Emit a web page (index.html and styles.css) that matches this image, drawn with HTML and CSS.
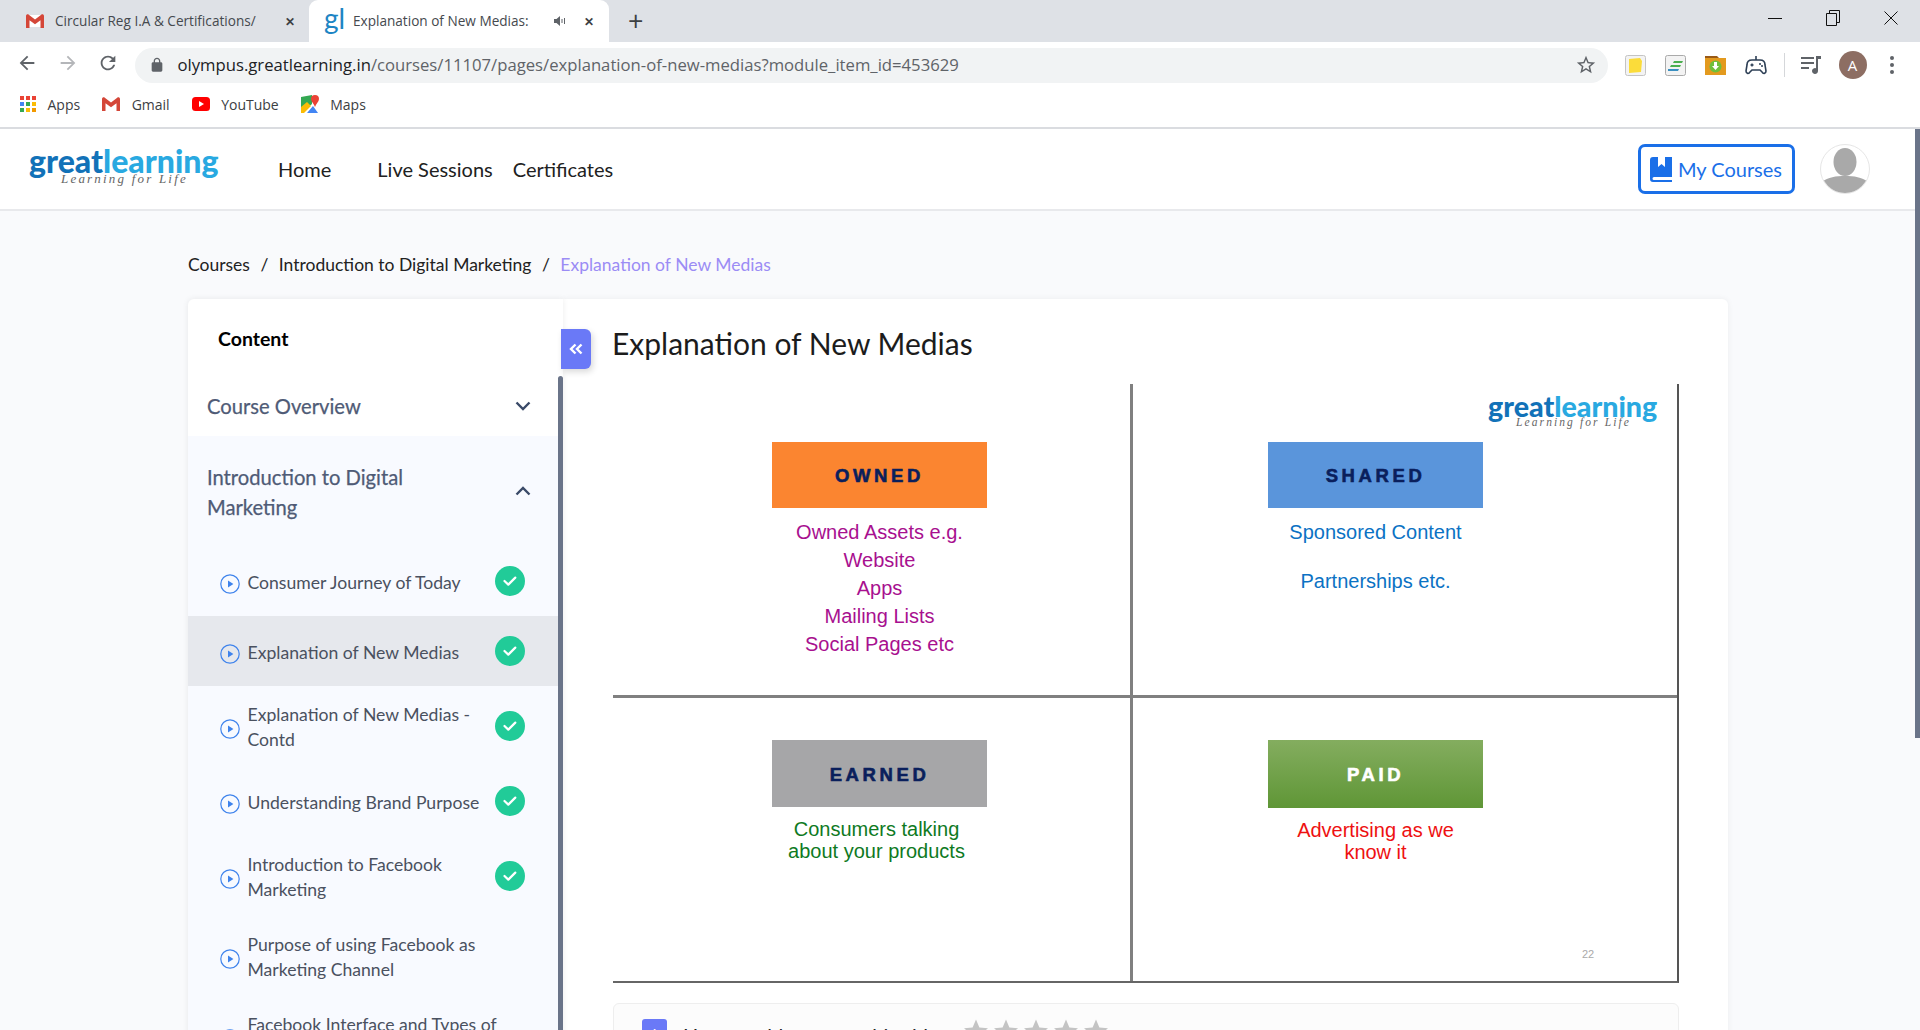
FILE: index.html
```html
<!DOCTYPE html>
<html lang="en">
  <head>
    <meta charset="UTF-8" />
    <title>Explanation of New Medias</title>
    <link rel="stylesheet" href="styles.css">
  </head>
  <body>
    <!-- Shared icons -->
    <svg class="sprite" aria-hidden="true">
      <symbol id="i-gmail" viewBox="0 0 18 14">
        <path fill="#e8eaed" d="M2 1h14v12H2z"/>
        <path fill="#fff" d="M3 1h12v12H3z"/>
        <path fill="#d44638" d="M0 2v12h3.5V6.2L9 10.2l5.5-4V14H18V2c0-1.4-1.6-2.2-2.8-1.3L9 5.5 2.8.7C1.6-.2 0 .6 0 2z"/>
      </symbol>
      <symbol id="i-play" viewBox="0 0 20 20">
        <circle cx="10" cy="10" r="9.2" fill="none" stroke="#3f83ec" stroke-width="1.2"/>
        <path fill="#3f83ec" d="M8 6.4l5.4 3.6L8 13.6z"/>
      </symbol>
      <symbol id="i-check" viewBox="0 0 30 30">
        <circle cx="15" cy="15" r="15" fill="#21cb98"/>
        <path fill="none" stroke="#fff" stroke-width="2.2" stroke-linecap="round" stroke-linejoin="round" d="M9.5 15l3.8 3.6 7-7"/>
      </symbol>
      <symbol id="i-star" viewBox="0 0 24 24">
        <path fill="#c4c4c4" d="M12 .5l3.4 8 8.6.7-6.5 5.6 2 8.4-7.5-4.5-7.5 4.5 2-8.4L0 9.2l8.6-.7z"/>
      </symbol>
    </svg>

    <!-- Browser tabs -->
    <div class="tabstrip">
      <div class="tab">
        <svg class="tab-icon" width="18" height="14"><use href="#i-gmail"/></svg>
        <span class="tab-title">Circular Reg I.A &amp; Certifications/</span>
        <span class="tab-close">&#10005;</span>
      </div>
      <div class="tab tab-active">
        <span class="gl-mark">gl</span>
        <span class="tab-title">Explanation of New Medias:</span>
        <svg class="tab-sound" width="14" height="14" viewBox="0 0 14 14"><path fill="#5f6368" d="M1 5h2.5L7 2v10L3.500 9H1z"/><path fill="none" stroke="#5f6368" d="M9 5v4M11.500 4v6"/></svg>
        <span class="tab-close">&#10005;</span>
      </div>
      <span class="tab-new">+</span>
      <div class="win-controls">
        <span class="win-btn"><svg width="14" height="14" viewBox="0 0 14 14"><path stroke="#111" d="M0 7.500h14"/></svg></span>
        <span class="win-btn"><svg width="14" height="16" viewBox="0 0 14 16"><path fill="none" stroke="#111" d="M.5 3.500h10v12H.5zM3.500 3.500V.5h10v12h-3"/></svg></span>
        <span class="win-btn"><svg width="14" height="14" viewBox="0 0 14 14"><path stroke="#111" d="M.5.5l13 13M13.500.5l-13 13"/></svg></span>
      </div>
    </div>

    <!-- Address bar -->
    <div class="toolbar">
      <span class="tool-btn"><svg width="22" height="22" viewBox="0 0 24 24"><path fill="#5f6368" d="M20 11H7.830l5.590-5.590L12 4l-8 8 8 8 1.410-1.410L7.830 13H20v-2z"/></svg></span>
      <span class="tool-btn"><svg width="22" height="22" viewBox="0 0 24 24"><path fill="#b4b6b9" d="M4 11h12.170l-5.590-5.590L12 4l8 8-8 8-1.410-1.410L16.170 13H4v-2z"/></svg></span>
      <span class="tool-btn"><svg width="22" height="22" viewBox="0 0 24 24"><path fill="#5f6368" d="M17.650 6.350C16.200 4.900 14.210 4 12 4c-4.420 0-7.990 3.580-7.990 8s3.570 8 7.990 8c3.730 0 6.840-2.550 7.730-6h-2.080c-.82 2.330-3.040 4-5.650 4-3.310 0-6-2.690-6-6s2.690-6 6-6c1.660 0 3.140.69 4.220 1.780L13 11h7V4l-2.350 2.350z"/></svg></span>
      <div class="omnibox">
        <svg class="lock" width="16" height="16" viewBox="0 0 24 24"><path fill="#5f6368" d="M18 8h-1V6c0-2.760-2.240-5-5-5S7 3.240 7 6v2H6c-1.100 0-2 .9-2 2v10c0 1.100.9 2 2 2h12c1.100 0 2-.9 2-2V10c0-1.100-.9-2-2-2zM9 6c0-1.660 1.340-3 3-3s3 1.340 3 3v2H9V6z"/></svg>
        <span class="url"><b>olympus.greatlearning.in</b>/courses/11107/pages/explanation-of-new-medias?module_item_id=453629</span>
        <svg class="omni-star" width="22" height="22" viewBox="0 0 24 24"><path fill="#5f6368" d="M22 9.240l-7.190-.62L12 2 9.190 8.630 2 9.240l5.460 4.730L5.820 21 12 17.270 18.180 21l-1.630-7.030L22 9.240zM12 15.400l-3.760 2.270 1-4.280-3.320-2.880 4.380-.38L12 6.100l1.710 4.040 4.380.38-3.320 2.880 1 4.280L12 15.400z"/></svg>
      </div>
      <div class="extensions">
        <span class="ext"><svg width="21" height="21" viewBox="0 0 21 21"><rect x=".5" y=".5" width="20" height="20" rx="2" fill="#f3f3f3" stroke="#c4c4c4"/><path fill="#fbdc3a" d="M4 4l11-1 2 3-1 11-12 1z"/></svg></span>
        <span class="ext"><svg width="21" height="21" viewBox="0 0 21 21"><rect x=".5" y=".5" width="20" height="20" rx="2" fill="#f3f3f3" stroke="#aaa"/><path fill="#4caf50" d="M9 6h9l-1 2H8zM6 10h10l-1 2H5z"/><path fill="#3a8fc0" d="M3 14h11l-1 2H3z"/></svg></span>
        <span class="ext"><svg width="21" height="20" viewBox="0 0 21 20"><path fill="#e39a1e" d="M0 3h21v17H0z"/><path fill="#9a5a16" d="M0 1h12l2 2H0z"/><circle cx="10.500" cy="11.500" r="6" fill="#6fbf3b"/><path fill="#fff" d="M9 7h3v4h2l-3.500 4L7 11h2z"/></svg></span>
        <span class="ext"><svg width="22" height="22" viewBox="0 0 22 22"><path fill="none" stroke="#2d3f55" stroke-width="1.600" d="M7 6h8c3 0 5 2 5 5l1 6c0 3-3 3-4 1l-2-2H7l-2 2c-1 2-4 2-4-1l1-6c0-3 2-5 5-5zM11 6V2"/><path fill="none" stroke="#2d3f55" stroke-width="1.400" d="M5.500 11h3M7 9.500v3"/><circle cx="15" cy="10" r="1" fill="#2d3f55"/><circle cx="17" cy="12" r="1" fill="#2d3f55"/></svg></span>
        <span class="ext-divider"></span>
        <span class="ext ext-media"><svg width="22" height="20" viewBox="0 0 22 20"><path stroke="#5f6368" stroke-width="2" d="M1 3h13M1 8h13M1 13h8"/><path fill="#5f6368" d="M16 1h5v3h-3v12a3 3 0 1 1-2-2.800z"/></svg></span>
        <span class="profile">A</span>
        <span class="kebab"><i></i><i></i><i></i></span>
      </div>
    </div>

    <!-- Bookmarks -->
    <div class="bookmarks">
      <span class="bookmark">
        <svg width="16" height="16" viewBox="0 0 16 16">
          <path fill="#ea4335" d="M0 0h4v4H0zM6 0h4v4H6zM12 0h4v4h-4z"/>
          <path fill="#4285f4" d="M0 6h4v4H0z"/><path fill="#34a853" d="M6 6h4v4H6z"/><path fill="#fbbc05" d="M12 6h4v4h-4z"/>
          <path fill="#34a853" d="M0 12h4v4H0z"/><path fill="#fbbc05" d="M6 12h4v4H6z"/><path fill="#f29900" d="M12 12h4v4h-4z"/>
        </svg>
        Apps
      </span>
      <span class="bookmark">
        <svg width="18" height="14"><use href="#i-gmail"/></svg>
        Gmail
      </span>
      <span class="bookmark">
        <svg width="18" height="14" viewBox="0 0 18 14"><rect width="18" height="14" rx="3.500" fill="#f00"/><path fill="#fff" d="M7 4l5 3-5 3z"/></svg>
        YouTube
      </span>
      <span class="bookmark">
        <svg width="18" height="18" viewBox="0 0 18 18">
          <path fill="#34a853" d="M0 2l11-2v9L0 18z"/><path fill="#fbbc05" d="M0 12l6-5 4 4-7 7H0z"/><path fill="#4285f4" d="M6 18l6-7 5 7z"/>
          <path fill="#ea4335" d="M14 0a4 4 0 0 1 4 4c0 2.500-3 5-4 8-1-3-4-5.500-4-8a4 4 0 0 1 4-4z"/>
        </svg>
        Maps
      </span>
    </div>

    <!-- Site header -->
    <header class="site-header">
      <a class="logo">
        <span class="logo-word"><span class="logo-great">great</span><span class="logo-learning">learning</span></span>
        <span class="logo-tag">Learning for Life</span>
      </a>
      <nav class="site-nav">
        <a class="nav-home">Home</a>
        <a>Live Sessions</a>
        <a>Certificates</a>
      </nav>
      <a class="my-courses">
        <svg width="22" height="25" viewBox="0 0 22 25"><path fill="#1a6fe8" d="M3 0h5v10l3.500-3 3.500 3V0h7v20H4a1.500 1.500 0 0 0 0 3h18v2H3a3 3 0 0 1-3-3V3a3 3 0 0 1 3-3z"/></svg>
        My Courses
      </a>
      <span class="avatar">
        <svg width="50" height="50" viewBox="0 0 50 50"><ellipse cx="25" cy="18" rx="11.500" ry="14" fill="#a9a9a9"/><path fill="#a9a9a9" d="M2 38c6-5 14-6 23-6s17 1 23 6a24.500 24.500 0 0 1-46 0z"/></svg>
      </span>
    </header>

    <div class="page">
      <div class="breadcrumb">
        <a>Courses</a><span class="sep">/</span><a>Introduction to Digital Marketing</a><span class="sep">/</span><a class="crumb-current">Explanation of New Medias</a>
      </div>

      <div class="course-layout">
        <aside class="sidebar">
          <h3 class="sidebar-title">Content</h3>
          <div class="sidebar-list">
            <div class="module module-closed">
              <span>Course Overview</span>
              <svg class="chev" width="16" height="10" viewBox="0 0 16 10"><path fill="none" stroke="#3a4a68" stroke-width="2.400" d="M1.500 1.500L8 8l6.500-6.500"/></svg>
            </div>
            <div class="module-open">
              <div class="module">
                <span>Introduction to Digital Marketing</span>
                <svg class="chev" width="16" height="10" viewBox="0 0 16 10"><path fill="none" stroke="#3a4a68" stroke-width="2.400" d="M1.500 8.500L8 2l6.500 6.500"/></svg>
              </div>
              <div class="lesson">
                <svg class="play" width="20" height="20"><use href="#i-play"/></svg>
                <span class="lesson-name">Consumer Journey of Today</span>
                <svg class="check" width="30" height="30"><use href="#i-check"/></svg>
              </div>
              <div class="lesson lesson-active">
                <svg class="play" width="20" height="20"><use href="#i-play"/></svg>
                <span class="lesson-name">Explanation of New Medias</span>
                <svg class="check" width="30" height="30"><use href="#i-check"/></svg>
              </div>
              <div class="lesson">
                <svg class="play" width="20" height="20"><use href="#i-play"/></svg>
                <span class="lesson-name lesson-name-short">Explanation of New Medias - Contd</span>
                <svg class="check" width="30" height="30"><use href="#i-check"/></svg>
              </div>
              <div class="lesson">
                <svg class="play" width="20" height="20"><use href="#i-play"/></svg>
                <span class="lesson-name">Understanding Brand Purpose</span>
                <svg class="check" width="30" height="30"><use href="#i-check"/></svg>
              </div>
              <div class="lesson">
                <svg class="play" width="20" height="20"><use href="#i-play"/></svg>
                <span class="lesson-name lesson-name-short">Introduction to Facebook Marketing</span>
                <svg class="check" width="30" height="30"><use href="#i-check"/></svg>
              </div>
              <div class="lesson">
                <svg class="play" width="20" height="20"><use href="#i-play"/></svg>
                <span class="lesson-name">Purpose of using Facebook as Marketing Channel</span>
              </div>
              <div class="lesson">
                <svg class="play" width="20" height="20"><use href="#i-play"/></svg>
                <span class="lesson-name">Facebook Interface and Types of Ads</span>
              </div>
            </div>
          </div>
          <span class="sidebar-thumb"></span>
        </aside>

        <span class="collapse-btn">
          <svg width="14" height="12" viewBox="0 0 14 12"><path fill="none" stroke="#fff" stroke-width="2.400" d="M6.500 1.500L2 6l4.500 4.500M12.500 1.500L8 6l4.500 4.500"/></svg>
        </span>

        <main class="content">
          <h1 class="page-title">Explanation of New Medias</h1>

          <!-- Video frame -->
          <div class="slide">
            <div class="quad quad-tl">
              <div class="quad-label label-owned">OWNED</div>
              <p class="quad-text text-owned">Owned Assets e.g.<br>Website<br>Apps<br>Mailing Lists<br>Social Pages etc</p>
            </div>
            <div class="quad quad-tr">
              <div class="quad-label label-shared">SHARED</div>
              <p class="quad-text text-shared">Sponsored Content</p>
              <p class="quad-text text-shared text-gap">Partnerships etc.</p>
            </div>
            <div class="quad quad-bl">
              <div class="quad-label label-earned">EARNED</div>
              <p class="quad-text quad-text-tight text-earned">Consumers talking<br>about your products</p>
            </div>
            <div class="quad quad-br">
              <div class="quad-label label-paid">PAID</div>
              <p class="quad-text quad-text-tight text-paid">Advertising as we<br>know it</p>
            </div>
            <span class="logo logo-small">
              <span class="logo-word"><span class="logo-great">great</span><span class="logo-learning">learning</span></span>
              <span class="logo-tag">Learning for Life</span>
            </span>
            <span class="slide-num">22</span>
          </div>

          <div class="rating">
            <span class="rating-icon">i</span>
            <span class="rating-text">How would you rate this video</span>
            <span class="stars">
              <svg width="24" height="24"><use href="#i-star"/></svg>
              <svg width="24" height="24"><use href="#i-star"/></svg>
              <svg width="24" height="24"><use href="#i-star"/></svg>
              <svg width="24" height="24"><use href="#i-star"/></svg>
              <svg width="24" height="24"><use href="#i-star"/></svg>
            </span>
          </div>
        </main>
      </div>
    </div>

    <span class="page-scrollbar"></span>
  </body>
</html>
```

FILE: styles.css
```css
/* Global */
* {
  box-sizing: border-box;
}
html, body {
  height: 100%;
}
body {
  margin: 0;
  height: 1030px;
  overflow: hidden;
  background: #f9fafc;
  font-family: Lato, 'Open Sans', sans-serif;
  color: #212121;
  position: relative;
}
.sprite {
  display: none;
}
/* Browser tabs */
.tabstrip {
  display: flex;
  align-items: flex-end;
  height: 42px;
  background: #dee1e6;
  font-family: 'Open Sans', sans-serif;
  font-size: 13.6px;
  color: #45494e;
}
.tab {
  display: flex;
  align-items: center;
  width: 309px;
  height: 42px;
  padding: 0 11px 0 26px;
}
.tab-active {
  width: 300px;
  background: #fff;
  border-radius: 9px 9px 0 0;
  padding: 0 12px 0 15px;
}
.tab-icon {
  flex: none;
  margin-right: 11px;
}
.gl-mark {
  flex: none;
  width: 29px;
  font-family: Lato, sans-serif;
  font-size: 28px;
  line-height: 30px;
  margin-top: -6px;
  color: #1d85c4;
}
.tab-title {
  flex: 1;
  margin-top: -2px;
  white-space: nowrap;
  overflow: hidden;
}
.tab-sound {
  flex: none;
  margin: 0 14px 0 12px;
}
.tab-close {
  flex: none;
  width: 16px;
  margin-left: 12px;
  font-size: 12px;
  font-weight: 700;
  text-align: center;
  color: #3c4043;
}
.tab-active .tab-sound + .tab-close {
  margin-left: 0;
}
.tab-new {
  align-self: center;
  margin-left: 19px;
  font-size: 27px;
  line-height: 42px;
  color: #3c4043;
}
.win-controls {
  display: flex;
  margin-left: auto;
  align-self: flex-start;
}
.win-btn {
  display: flex;
  align-items: center;
  justify-content: center;
  width: 58px;
  height: 36px;
}
/* Address bar */
.toolbar {
  display: flex;
  align-items: center;
  height: 42px;
  padding-left: 7px;
  background: #fff;
}
.tool-btn {
  display: flex;
  align-items: center;
  justify-content: center;
  width: 40.5px;
}
.omnibox {
  display: flex;
  align-items: center;
  width: 1473px;
  height: 35px;
  margin: 4px 0 0 6px;
  padding: 0 11px 0 14px;
  border-radius: 18px;
  background: #f1f3f4;
}
.lock {
  flex: none;
  margin-right: 13px;
}
.url {
  flex: 1;
  margin-top: -2px;
  font-family: 'Open Sans', sans-serif;
  font-size: 16.68px;
  white-space: nowrap;
  color: #5f6368;
}
.url b {
  font-weight: 400;
  color: #202124;
}
.extensions {
  display: flex;
  align-items: center;
  margin-top: 4px;
  margin-left: 8px;
}
.ext {
  display: flex;
  align-items: center;
  justify-content: center;
  width: 40px;
}
.ext-divider {
  width: 1px;
  height: 24px;
  margin: 0 7px 0 8px;
  background: #d5d7da;
}
.ext-media {
  width: 38px;
}
.profile {
  width: 28px;
  height: 28px;
  margin-left: 9px;
  border-radius: 50%;
  background: #8d6e63;
  color: #fff;
  font-family: 'Open Sans', sans-serif;
  font-size: 15px;
  line-height: 28px;
  text-align: center;
}
.kebab {
  display: flex;
  flex-direction: column;
  gap: 3px;
  margin-left: 23px;
}
.kebab i {
  width: 4px;
  height: 4px;
  border-radius: 50%;
  background: #5f6368;
}
/* Bookmarks */
.bookmarks {
  display: flex;
  align-items: center;
  height: 45px;
  padding: 0 0 3px 20px;
  gap: 22px;
  background: #fff;
  border-bottom: 2px solid #dadce0;
  font-family: 'Open Sans', sans-serif;
  font-size: 14px;
  color: #3c4043;
}
.bookmark {
  display: flex;
  align-items: center;
  gap: 11.5px;
}
/* Site header */
.site-header {
  display: flex;
  align-items: center;
  height: 82px;
  padding: 0 50px 0 29px;
  background: #fff;
  border-bottom: 2px solid #e8e9ec;
}
.logo {
  display: flex;
  flex-direction: column;
  width: 191px;
  line-height: 1;
}
.logo-word {
  font-family: Lato, sans-serif;
  font-size: 32px;
  font-weight: 900;
  line-height: 26px;
  margin-top: -6px;
}
.logo-great {
  color: #1272b8;
}
.logo-learning {
  color: #29a9e1;
}
.logo-tag {
  margin: -2px 0 0 32px;
  font-family: 'Liberation Serif', serif;
  font-style: italic;
  font-size: 13px;
  letter-spacing: 2.2px;
  color: #666;
}
.site-nav {
  display: flex;
  gap: 20px;
  margin-left: 58px;
  font-size: 20px;
}
.nav-home {
  margin-right: 26px;
}
.my-courses {
  display: flex;
  align-items: center;
  gap: 6px;
  height: 50px;
  margin-left: auto;
  padding: 0 10px 0 9px;
  border: 3px solid #1a6fe8;
  border-radius: 7px;
  color: #1a6fe8;
  font-size: 20px;
}
.avatar {
  display: block;
  width: 50px;
  height: 50px;
  margin-left: 25px;
  border: 1px solid #e6e6e6;
  border-radius: 50%;
  overflow: hidden;
}
.avatar svg {
  display: block;
  margin: -1px;
}
/* Breadcrumb */
.page {
  padding: 42px 0 0 188px;
}
.breadcrumb {
  display: flex;
  font-size: 17.5px;
  line-height: 24px;
  margin-bottom: 22px;
  color: #222;
}
.sep {
  margin: 0 10.5px;
}
.crumb-current {
  color: #9b8cf5;
}
/* Course layout */
.course-layout {
  display: flex;
  position: relative;
  width: 1540px;
}
.sidebar {
  flex: none;
  width: 375px;
  position: relative;
  background: #fff;
  border-radius: 6px 0 0 0;
  box-shadow: 0 0 6px rgba(0, 0, 0, 0.08);
}
.sidebar-title {
  margin: 0;
  padding: 28px 0 0 30px;
  height: 77px;
  font-size: 19.5px;
  font-weight: 700;
  line-height: 24px;
  color: #000;
}
.sidebar-list {
  margin-right: 5px;
}
.sidebar-thumb {
  position: absolute;
  top: 77px;
  right: 0;
  bottom: 0;
  width: 5px;
  border-radius: 3px 3px 0 0;
  background: #6a7489;
}
.module {
  display: flex;
  align-items: center;
  justify-content: space-between;
  padding: 26px 27px 24px 19px;
  font-size: 20.2px;
  line-height: 30px;
  -webkit-text-stroke: 0.25px currentColor;
  color: #4f5b76;
}
.module span {
  width: 220px;
}
.module-closed {
  height: 60px;
  padding-top: 0;
  padding-bottom: 0;
}
.module-open {
  background: #f8faff;
}
.module-open .chev {
  margin-top: -2px;
}
.lesson {
  display: flex;
  align-items: center;
  min-height: 70px;
  padding: 16px 33px 14px 32px;
  font-size: 17.6px;
  line-height: 25px;
  color: #4a5160;
}
.lesson-active {
  background: #e6e8ed;
}
.play {
  flex: none;
  margin: 4px 7.5px 0 0;
}
.lesson-name {
  max-width: 250px;
}
.lesson-name-short {
  max-width: 237px;
}
.check {
  flex: none;
  margin: -2px 0 0 auto;
}
.collapse-btn {
  position: absolute;
  top: 30px;
  left: 373px;
  display: flex;
  align-items: center;
  justify-content: center;
  width: 30px;
  height: 40px;
  border-radius: 0 6px 6px 0;
  background: #6a79f7;
  box-shadow: 2px 3px 6px rgba(0, 0, 0, 0.15);
}
/* Main panel */
.content {
  flex: 1;
  padding: 24px 49px 0 50px;
  background: #fff;
  border-radius: 0 6px 0 0;
  box-shadow: 0 0 6px rgba(0, 0, 0, 0.06);
}
.page-title {
  margin: 0 0 21px -1px;
  font-size: 30px;
  font-weight: 400;
  line-height: 40px;
  color: #1c1c1c;
}
/* Slide frame */
.slide {
  display: grid;
  position: relative;
  grid-template-columns: 520px 1fr;
  grid-template-rows: 314px 1fr;
  height: 599px;
  font-family: 'Liberation Sans', Arial, sans-serif;
  border-right: 2px solid #555;
  border-bottom: 2px solid #666;
}
.quad {
  padding-top: 58px;
}
.quad-tl, .quad-bl {
  padding-left: 159px;
  padding-right: 143px;
  border-right: 3px solid #808080;
}
.quad-tr, .quad-br {
  padding-left: 135px;
  padding-right: 194px;
}
.quad-tl, .quad-tr {
  border-bottom: 3px solid #808080;
}
.quad-bl, .quad-br {
  padding-top: 42px;
}
.quad-label {
  height: 66px;
  font-size: 18.5px;
  font-weight: 700;
  line-height: 67px;
  letter-spacing: 3.6px;
  text-align: center;
  -webkit-text-stroke: 0.6px currentColor;
  color: #0a1f5c;
}
.label-owned {
  background: #fb8530;
}
.label-shared {
  background: #5a95db;
}
.label-earned {
  height: 67px;
  line-height: 69px;
  background: #a6a6a8;
}
.label-paid {
  height: 68px;
  line-height: 69px;
  background: linear-gradient(#84ad5f, #5f9636);
  color: #fff;
}
.quad-text {
  margin: 10px -30px 0;
  font-size: 20px;
  line-height: 28px;
  text-align: center;
}
.quad-text-tight {
  margin-top: 12px;
  line-height: 21.5px;
}
.text-owned {
  color: #a8108f;
}
.text-shared {
  color: #0b72c4;
}
.text-gap {
  margin-top: 21px;
}
.text-earned {
  margin-left: -33px;
  margin-right: -27px;
  color: #0f7a1f;
}
.text-paid {
  color: #ee1111;
}
.logo-small {
  position: absolute;
  top: 10px;
  left: 875px;
  width: 172px;
}
.logo-small .logo-word {
  margin-top: 0;
  font-size: 28.6px;
  line-height: 24px;
}
.logo-small .logo-tag {
  margin: -1px 0 0 28px;
  font-size: 11.5px;
  letter-spacing: 2.1px;
}
.slide-num {
  position: absolute;
  left: 969px;
  top: 564px;
  font-size: 11px;
  color: #aaa;
}
/* Rating */
.rating {
  display: flex;
  align-items: flex-start;
  height: 80px;
  margin-top: 20px;
  padding: 15px 28px;
  background: #fcfcfc;
  border: 1px solid #eee;
  border-radius: 6px;
}
.rating-icon {
  width: 25px;
  height: 30px;
  border-radius: 3px;
  background: #6a79f7;
  color: #fff;
  font-size: 15px;
  line-height: 30px;
  text-align: center;
}
.rating-text {
  margin: 1px 0 0 16px;
  font-size: 20px;
  line-height: 30px;
  color: #222;
}
.stars {
  display: flex;
  gap: 6px;
  margin: 0 0 0 14px;
}
.page-scrollbar {
  position: absolute;
  top: 129px;
  right: 0;
  width: 5px;
  height: 609px;
  background: #6a7489;
}
```
